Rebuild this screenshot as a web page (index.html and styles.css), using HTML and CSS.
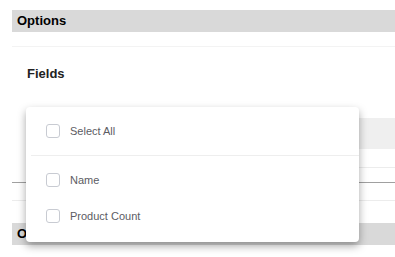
FILE: index.html
```html
<!DOCTYPE html>
<html lang="en">
<head>
    <meta charset="UTF-8">
    <meta name="viewport" content="width=device-width, initial-scale=1.0">
    <title>Options</title>
    <link rel="stylesheet" href="styles.css">
</head>
<body>
    <div class="panel">
        <div class="section-title">Options</div>
        <div class="divider"></div>

        <div class="fields">
            <h3 class="fields-title">Fields</h3>
            <div class="fields-table">
                <div class="table-head"></div>
                <div class="table-row"></div>
            </div>
        </div>
        <div class="rule-dark"></div>
        <div class="rule-light"></div>

        <div class="section-title second">Options</div>
    </div>

    <div class="dropdown">
        <label class="option">
            <span class="check"></span> Select All
        </label>
        <div class="dropdown-sep"></div>
        <label class="option">
            <span class="check"></span> Name
        </label>
        <label class="option">
            <span class="check"></span> Product Count
        </label>
    </div>
</body>
</html>
```

FILE: styles.css
```css
body {
    font-family: 'Liberation Sans', Arial, sans-serif;
    background-color: #fff;
    margin: 0;
    padding: 10px 0 0 12px;
}

.section-title {
    height: 22px;
    line-height: 22px;
    padding-left: 5px;
    background-color: #d9d9d9;
    font-size: 13px;
    font-weight: bold;
    color: #000;
}

.section-title.second {
    margin-top: 22px;
}

.divider {
    margin-top: 14px;
    border-top: 1px solid #f3f3f3;
}

.fields {
    padding-left: 15px;
}

.fields-title {
    margin: 0;
    padding-top: 19px;
    font-size: 13px;
    line-height: 16px;
    font-weight: bold;
    color: #222;
}

.fields-table {
    margin-top: 36px;
}

.table-head {
    height: 31px;
    background-color: #efefef;
}

.table-row {
    height: 18px;
    border-bottom: 1px solid #ececec;
}

.rule-dark {
    margin-top: 14px;
    border-top: 1px solid #a0a0a0;
}

.rule-light {
    margin-top: 17px;
    border-top: 1px solid #ececec;
}

.dropdown {
    position: absolute;
    left: 26px;
    top: 107px;
    width: 333px;
    height: 135px;
    box-sizing: border-box;
    padding-top: 6px;
    background-color: #fff;
    border-radius: 4px;
    box-shadow: 0 4px 8px rgba(0, 0, 0, 0.35);
}

.option {
    display: flex;
    align-items: center;
    height: 36px;
    padding-left: 20px;
    font-size: 11px;
    color: #5c5c63;
    cursor: pointer;
}

.check {
    width: 14px;
    height: 14px;
    margin-right: 10px;
    box-sizing: border-box;
    border: 1px solid #c8cbd2;
    border-radius: 3px;
    background-color: #fff;
}

.dropdown-sep {
    margin: 6px 0 6px 5px;
    border-top: 1px solid #eeeeee;
}
```
